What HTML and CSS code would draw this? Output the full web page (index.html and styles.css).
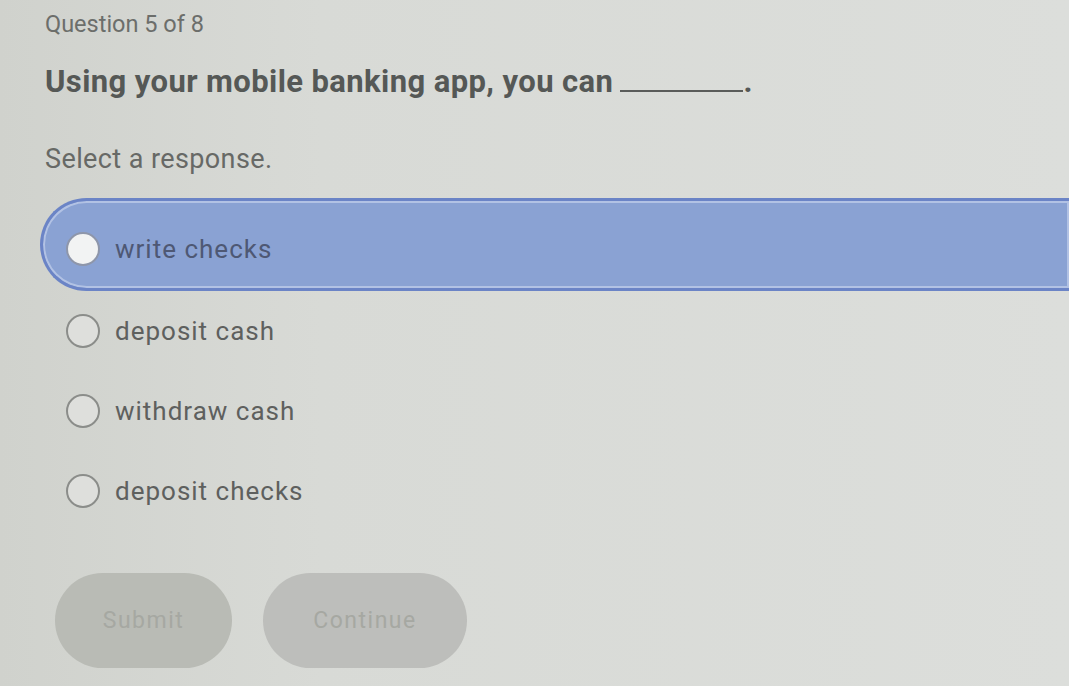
FILE: index.html
```html
<!DOCTYPE html>
<html lang="en">
<head>
<meta charset="utf-8">
<title>Question 5 of 8</title>
<link rel="stylesheet" href="styles.css">
</head>
<body>
<main class="page">
  <p class="counter">Question 5 of 8</p>
  <h1 class="question">Using your mobile banking app, you can <span class="blank"></span>.</h1>
  <p class="prompt">Select a response.</p>
  <ul class="options">
    <li class="option selected"><span class="radio"></span><span class="label">write checks</span></li>
    <li class="option"><span class="radio"></span><span class="label">deposit cash</span></li>
    <li class="option"><span class="radio"></span><span class="label">withdraw cash</span></li>
    <li class="option"><span class="radio"></span><span class="label">deposit checks</span></li>
  </ul>
  <div class="actions">
    <button class="btn submit" type="button">Submit</button>
    <button class="btn continue" type="button">Continue</button>
  </div>
</main>
</body>
</html>
```
FILE: styles.css
```css
html, body {
  margin: 0;
  height: 100%;
  overflow: hidden;
}
body {
  background: linear-gradient(90deg, #d0d2cd 0%, #d8dad6 30%, #dcdedb 100%);
  font-family: Roboto, "Liberation Sans", Arial, sans-serif;
}
.page {
  padding: 10px 0 0 45px;
}
.counter {
  margin: 0;
  font-size: 23.5px;
  line-height: 28px;
  color: #6c6e6b;
}
.question {
  margin: 26px 0 0;
  font-size: 31px;
  line-height: 36px;
  font-weight: 700;
  letter-spacing: 0.4px;
  color: #555856;
}
.blank {
  display: inline-block;
  width: 123px;
  height: 0;
  border-bottom: 2px solid #5a5c5a;
  margin-left: -1px;
}
.prompt {
  margin: 43px 0 0;
  font-size: 27px;
  line-height: 32px;
  letter-spacing: 0.4px;
  color: #676966;
}
.options {
  list-style: none;
  margin: 23px 0 0 -5px;
  padding: 0;
}
.option {
  box-sizing: border-box;
  height: 80px;
  display: flex;
  align-items: center;
  gap: 15px;
  padding-left: 23px;
  border: 3px solid transparent;
  border-right: none;
}
.option.selected {
  height: 93px;
  padding-top: 8px;
  background: #8aa2d3;
  border-color: #6b84c6;
  border-radius: 47px 0 0 47px;
  box-shadow: inset 0 0 0 2px #b2c2e4;
}
.radio {
  box-sizing: border-box;
  width: 34px;
  height: 34px;
  border-radius: 50%;
  border: 2px solid #8b8d8a;
  background: #dedfdc;
  flex: none;
}
.selected .radio {
  background: #f2f3f3;
  border-color: #8e96aa;
}
.label {
  font-size: 26px;
  line-height: 32px;
  letter-spacing: 1px;
  color: #5e605e;
}
.selected .label {
  color: #4e5874;
}
.actions {
  display: flex;
  gap: 31px;
  margin: 42px 0 0 10px;
}
.btn {
  height: 95px;
  border: none;
  border-radius: 48px;
  background: #b9bbb5;
  color: #a6a8a2;
  font-family: inherit;
  font-size: 23px;
  letter-spacing: 1.5px;
  padding: 0;
}
.submit {
  width: 177px;
}
.continue {
  width: 204px;
  background: #bdbebb;
}
```
